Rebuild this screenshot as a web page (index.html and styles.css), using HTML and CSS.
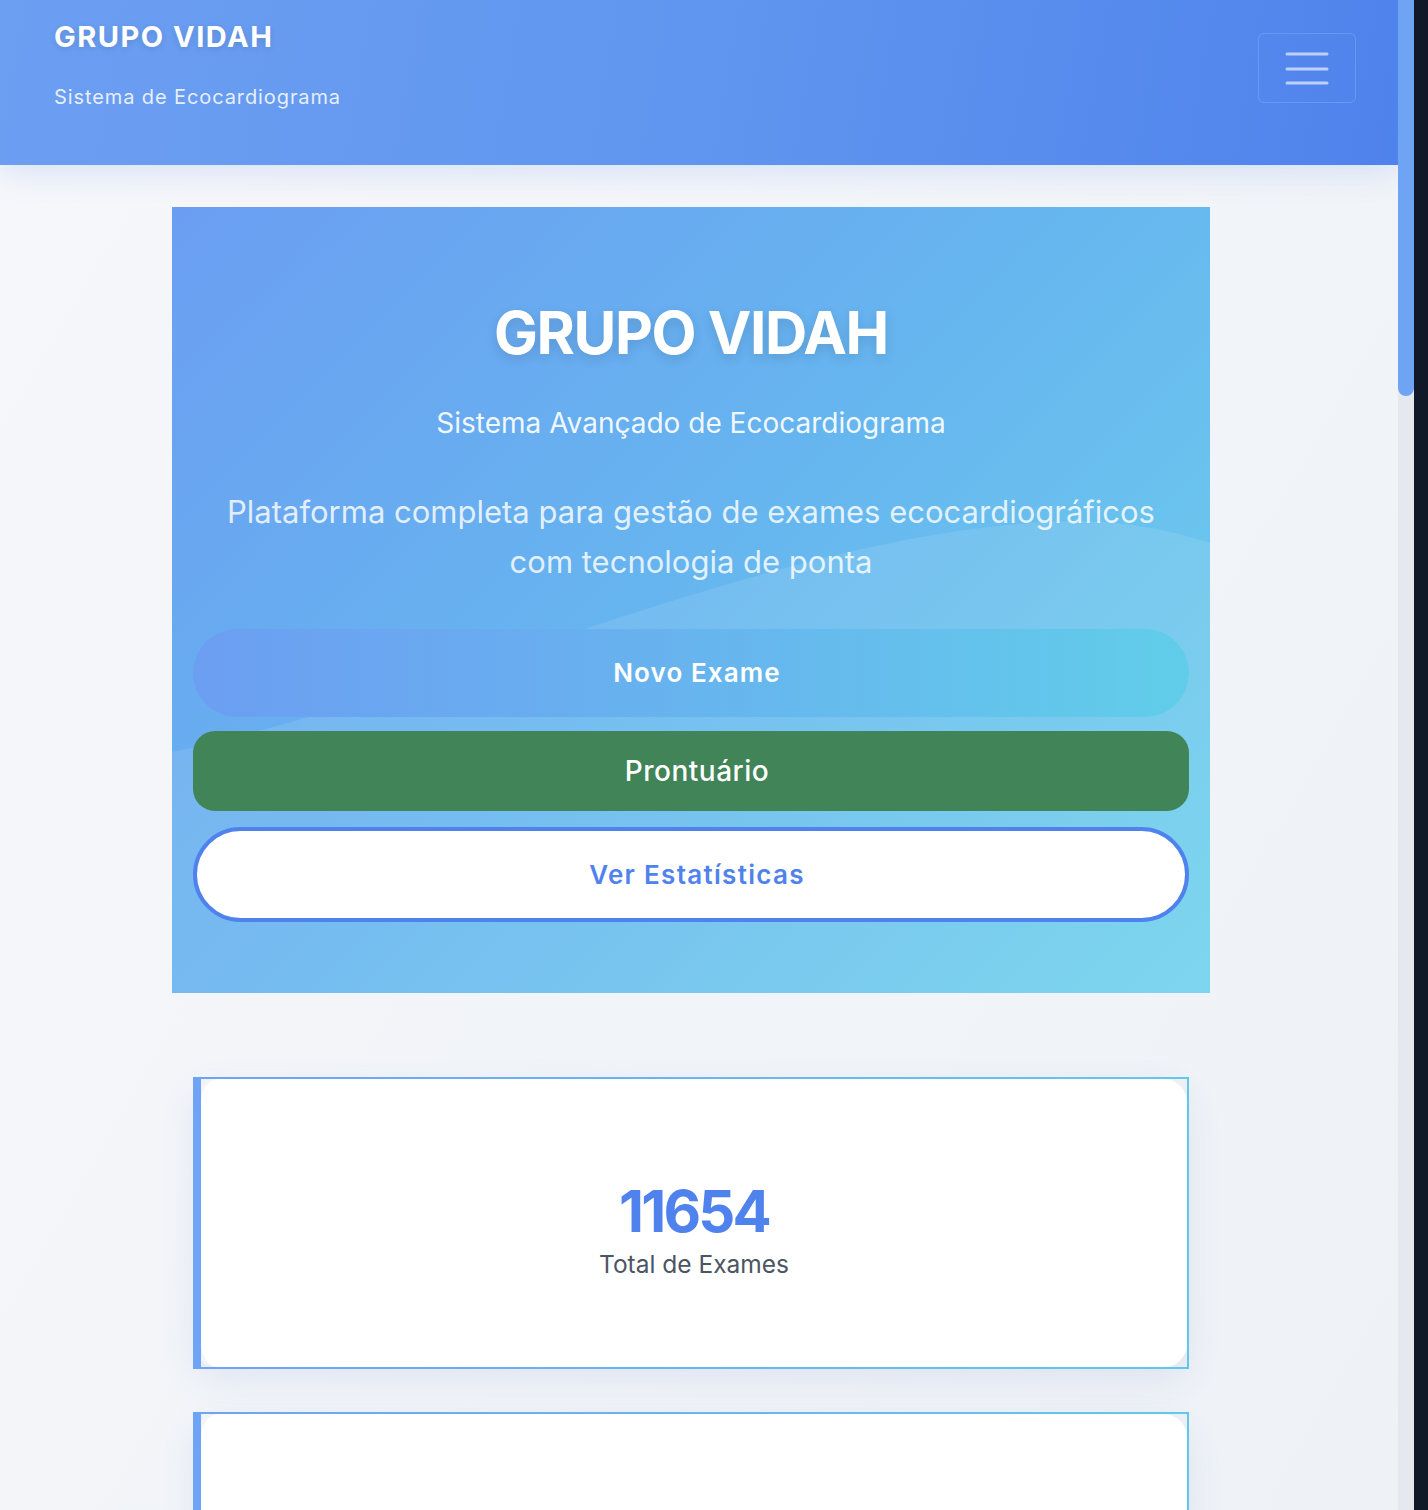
FILE: index.html
```html
<!DOCTYPE html>
<html lang="pt-BR">
<head>
<meta charset="utf-8">
<title>Grupo Vidah - Sistema de Ecocardiograma</title>
<link rel="stylesheet" href="styles.css">
</head>
<body>
<div class="app">
  <header class="navbar">
    <div class="brand">
      <div class="brand-title">GRUPO VIDAH</div>
      <div class="brand-sub">Sistema de Ecocardiograma</div>
    </div>
    <button class="toggler" aria-label="Menu">
      <svg width="44" height="34" viewBox="0 0 44 34" aria-hidden="true">
        <path d="M2 3H42M2 18H42M2 32H42" stroke="rgba(255,255,255,0.62)" stroke-width="3" stroke-linecap="round" fill="none"/>
      </svg>
    </button>
  </header>

  <main class="main">
    <section class="hero">
      <svg class="hero-wave" viewBox="0 0 1038 786" preserveAspectRatio="none" aria-hidden="true">
        <path d="M0,545 C300,480 620,320 900,314 C960,314 1004,325 1038,336 L1038,786 L0,786 Z" fill="rgba(255,255,255,0.1)"/>
      </svg>
      <div class="hero-body">
        <h1 class="hero-title">GRUPO VIDAH</h1>
        <p class="hero-lead">Sistema Avançado de Ecocardiograma</p>
        <p class="hero-text">Plataforma completa para gestão de exames ecocardiográficos com tecnologia de ponta</p>
        <div class="actions">
          <a class="btn btn-primary" href="#">Novo Exame</a>
          <a class="btn btn-success" href="#">Prontuário</a>
          <a class="btn btn-outline" href="#">Ver Estatísticas</a>
        </div>
      </div>
    </section>

    <section class="stats">
      <div class="stat-card">
        <div class="stat-number">11654</div>
        <div class="stat-label">Total de Exames</div>
      </div>
      <div class="stat-card">
        <div class="stat-number">38</div>
        <div class="stat-label">Exames Hoje</div>
      </div>
    </section>
  </main>
</div>
<div class="rail" aria-hidden="true"><div class="thumb"></div></div>
</body>
</html>
```

FILE: styles.css
```css
* { box-sizing: border-box; }

html, body {
  margin: 0;
  height: 100%;
}

body {
  display: flex;
  overflow: hidden;
  background: #111827;
  font-family: Inter, "Noto Sans", "Liberation Sans", sans-serif;
  color: #1f2937;
}

.app {
  flex: 1;
  min-width: 0;
  height: 100vh;
  overflow: hidden;
  background: linear-gradient(120deg, #f6f7fa 0%, #f1f4f8 60%, #eef1f6 100%);
}

/* scrollbar rail */
.rail {
  width: 16px;
  margin-right: 14px;
  height: 100vh;
  background: #e5e8ee;
}

.thumb {
  height: 396px;
  background: #6fa3f4;
  border-radius: 0 0 8px 8px;
}

/* Header */
.navbar {
  height: 165px;
  display: flex;
  justify-content: space-between;
  align-items: flex-start;
  padding: 0 42px 0 54px;
  background: linear-gradient(100deg, #6c9ff2 0%, #6096ef 50%, #4f83ec 100%);
  box-shadow: 0 6px 30px rgba(79, 130, 236, 0.18);
  position: relative;
  z-index: 2;
}

.brand { padding-top: 19px; }

.brand-title {
  color: #fff;
  font-size: 29px;
  font-weight: 700;
  letter-spacing: 1.5px;
  line-height: 36px;
  text-shadow: 0 2px 6px rgba(0, 0, 0, 0.12);
}

.brand-sub {
  margin-top: 28px;
  color: rgba(255, 255, 255, 0.85);
  font-size: 20px;
  letter-spacing: 0.9px;
  line-height: 28px;
}

.toggler {
  margin-top: 33px;
  width: 98px;
  height: 70px;
  border: 1.5px solid rgba(255, 255, 255, 0.15);
  border-radius: 6px;
  background: transparent;
  display: flex;
  align-items: center;
  justify-content: center;
  padding: 0;
}

/* Main */
.main {
  padding: 42px 16px 0 0;
}

.hero {
  position: relative;
  overflow: hidden;
  max-width: 1038px;
  margin: 0 auto;
  background: linear-gradient(135deg, #6b9ef2 0%, #66b6ef 50%, #6fd2ec 100%);
}

.hero-wave {
  position: absolute;
  inset: 0;
  width: 100%;
  height: 100%;
}

.hero-body {
  position: relative;
  padding: 90px 21px 71px;
  text-align: center;
}

.hero-title {
  margin: 0;
  color: #fff;
  font-size: 58.5px;
  font-weight: 700;
  line-height: 72px;
  letter-spacing: -1.4px;
  text-shadow: 0 4px 12px rgba(0, 0, 0, 0.12);
}

.hero-lead {
  margin: 34px 0 0;
  color: rgba(255, 255, 255, 0.92);
  font-size: 28px;
  line-height: 40px;
}

.hero-text {
  margin: 44px auto 0;
  max-width: 960px;
  color: rgba(255, 255, 255, 0.82);
  font-size: 31px;
  line-height: 50px;
}

.actions {
  margin-top: 42px;
  display: flex;
  flex-direction: column;
}

.btn {
  display: flex;
  align-items: center;
  justify-content: center;
  color: #fff;
  text-decoration: none;
  font-size: 26px;
  padding-left: 12px;
}

.btn-primary {
  height: 88px;
  border-radius: 44px;
  background: linear-gradient(90deg, #6c9ef2 0%, #67b4ee 50%, #61cdea 100%);
  font-weight: 600;
  letter-spacing: 1.1px;
  padding-bottom: 2px;
}

.btn-success {
  margin-top: 14px;
  height: 80px;
  border-radius: 22px;
  background: #408458;
  font-weight: 500;
  font-size: 28px;
  letter-spacing: 0.5px;
}

.btn-outline {
  margin-top: 16px;
  height: 95px;
  border-radius: 48px;
  background: #fff;
  border: 4px solid #4f82ec;
  color: #4f82ec;
  font-weight: 600;
  letter-spacing: 1.3px;
}

/* Stats */
.stats {
  max-width: 1038px;
  margin: 84px auto 0;
  padding: 0 21px;
  display: flex;
  flex-direction: column;
  gap: 43px;
}

.stat-card {
  height: 292px;
  display: flex;
  flex-direction: column;
  align-items: center;
  justify-content: center;
  background: #fff;
  background-clip: padding-box;
  border-radius: 26px;
  border-style: solid;
  border-width: 2px 2px 2px 8px;
  border-image: linear-gradient(90deg, #6fa3f5, #62c8ea) 1;
  box-shadow: 0 12px 34px rgba(79, 110, 200, 0.10);
  padding-top: 10px;
}

.stat-number {
  color: #4f82ec;
  font-size: 58px;
  font-weight: 700;
  line-height: 68px;
  letter-spacing: -2.8px;
}

.stat-label {
  margin-top: 3px;
  color: #4b5563;
  font-size: 24.5px;
  line-height: 32px;
}
```
